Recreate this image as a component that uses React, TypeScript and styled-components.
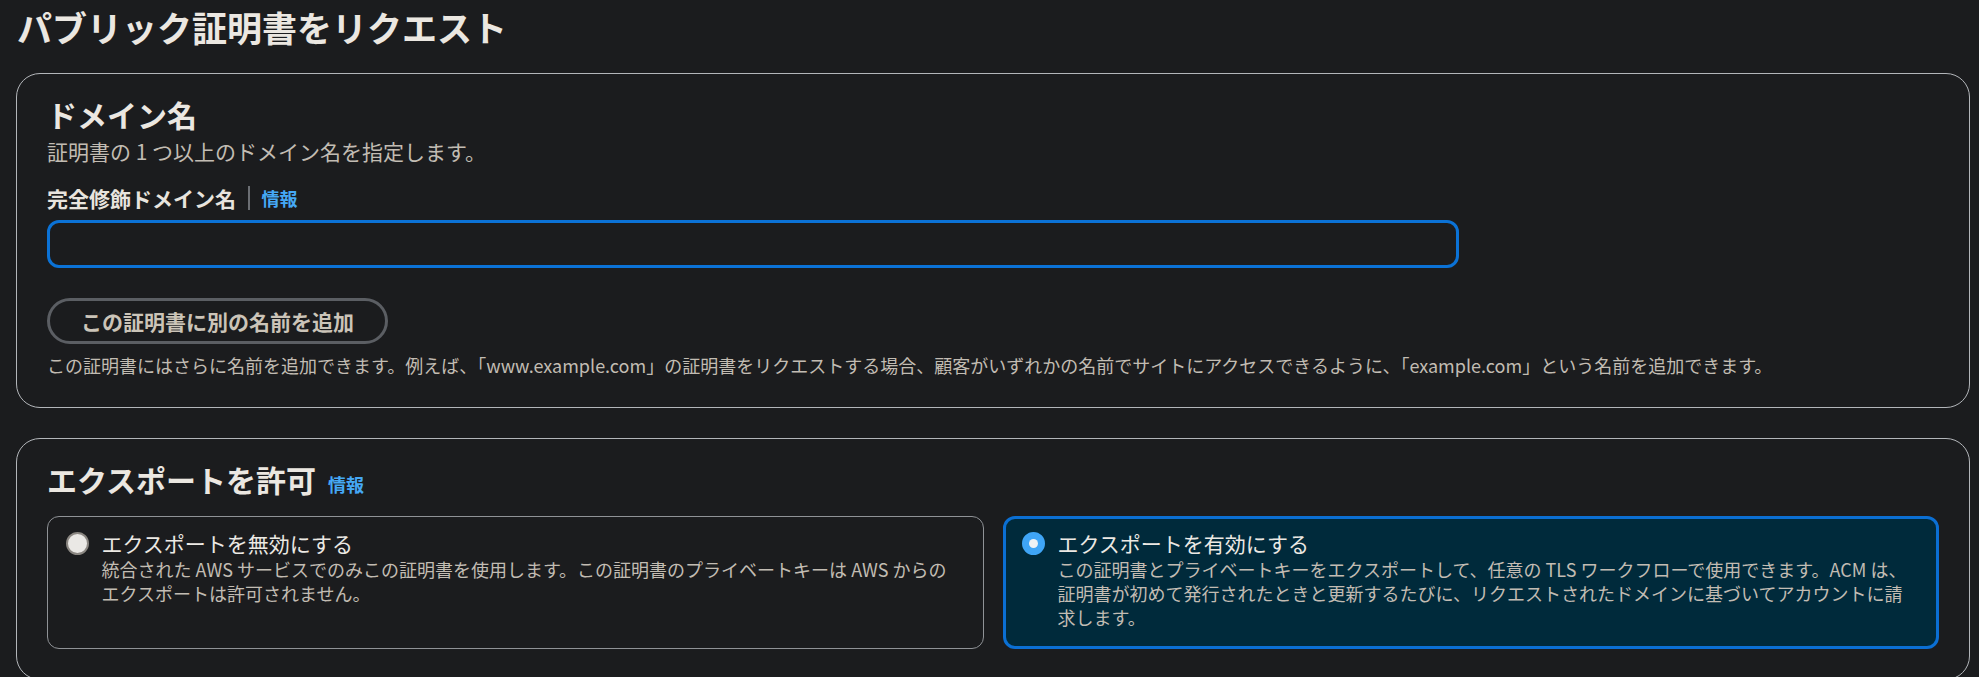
import React from 'react';
import styled, {createGlobalStyle} from 'styled-components';

const GlobalStyle = createGlobalStyle`
  html, body {
    margin: 0;
    padding: 0;
    background: #1b1c1e;
    overflow: hidden;
  }
  body {
    font-family: "Noto Sans CJK JP", "Noto Sans", sans-serif;
    color: #e8e5e0;
  }
  * {
    box-sizing: border-box;
  }
`;

const Page = styled.div`
  min-height: 677px;
  padding: 0 9px 0 16px;
  display: flex;
  flex-direction: column;
`;

const PageTitle = styled.h1`
  margin: 4px 0 23px 1px;
  font-size: 35px;
  line-height: 46px;
  font-weight: 700;
  color: #ebe7e1;
`;

const Container = styled.section`
  border: 1.5px solid #b3b6ba;
  border-radius: 24px;
  padding: 22px 30px 30px;
  margin-bottom: 30px;
`;

const HeaderRow = styled.div`
  display: flex;
  align-items: baseline;
  gap: 12px;
`;

const SectionTitle = styled.h2`
  margin: 0;
  font-size: 30px;
  line-height: 36px;
  font-weight: 700;
  color: #ebe7e1;
`;

const Description = styled.p`
  margin: 4px 0 0;
  font-size: 21px;
  line-height: 30px;
  color: #c2bcb3;
`;

const InfoLink = styled.a<{ $size?: number }>`
  font-size: ${p => p.$size ?? 18}px;
  font-weight: 700;
  color: #45a8f5;
  text-decoration: none;
  cursor: pointer;
`;

const FieldLabel = styled.div`
  margin-top: 17px;
  display: flex;
  align-items: center;
  font-size: 21px;
  line-height: 30px;
  font-weight: 700;
  color: #e8e4de;
`;

const LabelDivider = styled.span`
  width: 1.5px;
  height: 24px;
  background: #6b6e73;
  margin: 0 12px;
`;

const TextInput = styled.input`
  display: block;
  margin-top: 7px;
  width: 1412px;
  height: 48px;
  border: 3px solid #0b72d6;
  border-radius: 12px;
  background: transparent;
  color: #e8e4de;
  font: inherit;
  font-size: 21px;
  padding: 0 18px;
  outline: none;
`;

const SecondaryButton = styled.button`
  display: block;
  margin-top: 30px;
  height: 46px;
  padding: 0 31px;
  border: 3px solid #5b5e63;
  border-radius: 23px;
  background: transparent;
  color: #cbc4b8;
  font-family: inherit;
  font-size: 21px;
  font-weight: 700;
  line-height: 1;
  cursor: pointer;
`;

const Constraint = styled.p`
  margin: 9px 0 0;
  font-size: 18px;
  line-height: 24px;
  color: #c2bcb3;
`;

const TileGrid = styled.div`
  margin-top: 19px;
  display: grid;
  grid-template-columns: 1fr 1fr;
  gap: 19px;
`;

const Tile = styled.label<{ $selected?: boolean }>`
  display: flex;
  align-items: flex-start;
  gap: 13px;
  border-radius: 12px;
  border: ${p => (p.$selected ? '3px solid #0b6fd3' : '1.5px solid #8f9296')};
  background: ${p => (p.$selected ? '#002a3b' : 'transparent')};
  padding: ${p => (p.$selected ? '10px 26px 17px 16px' : '11.5px 27.5px 18.5px 17.5px')};
  cursor: pointer;
`;

const Radio = styled.span<{ $checked?: boolean }>`
  flex: none;
  width: 23px;
  height: 23px;
  margin-top: 3px;
  border-radius: 50%;
  display: flex;
  align-items: center;
  justify-content: center;
  background: ${p => (p.$checked ? '#3fa5f6' : '#eae8e5')};
  border: 2px solid ${p => (p.$checked ? '#3fa5f6' : '#8a8681')};

  &::after {
    content: '';
    display: ${p => (p.$checked ? 'block' : 'none')};
    width: 9px;
    height: 9px;
    border-radius: 50%;
    background: #eef1f4;
  }
`;

const TileText = styled.div`
  display: flex;
  flex-direction: column;
`;

const TileLabel = styled.span`
  font-size: 21px;
  line-height: 28px;
  color: #ece9e4;
`;

const TileDescription = styled.span`
  font-size: 18px;
  line-height: 24px;
  color: #c2bcb3;
`;

type ExportOption = {
    id: string
    label: string
    description: string
}

const exportOptions: ExportOption[] = [
    {
        id: 'disable',
        label: 'エクスポートを無効にする',
        description: '統合された AWS サービスでのみこの証明書を使用します。この証明書のプライベートキーは AWS からのエクスポートは許可されません。',
    },
    {
        id: 'enable',
        label: 'エクスポートを有効にする',
        description: 'この証明書とプライベートキーをエクスポートして、任意の TLS ワークフローで使用できます。ACM は、証明書が初めて発行されたときと更新するたびに、リクエストされたドメインに基づいてアカウントに請求します。',
    },
];

export default function App() {
    const [domain, setDomain] = React.useState('');
    const [exportMode, setExportMode] = React.useState('enable');

    return (
        <React.Fragment>
            <GlobalStyle />
            <Page>
                <PageTitle>パブリック証明書をリクエスト</PageTitle>

                <Container>
                    <SectionTitle>ドメイン名</SectionTitle>
                    <Description>証明書の 1 つ以上のドメイン名を指定します。</Description>

                    <FieldLabel>
                        完全修飾ドメイン名
                        <LabelDivider />
                        <InfoLink>情報</InfoLink>
                    </FieldLabel>
                    <TextInput value={domain} onChange={e => setDomain(e.target.value)} />

                    <SecondaryButton>この証明書に別の名前を追加</SecondaryButton>
                    <Constraint>
                        この証明書にはさらに名前を追加できます。例えば、「www.example.com」の証明書をリクエストする場合、顧客がいずれかの名前でサイトにアクセスできるように、「example.com」という名前を追加できます。
                    </Constraint>
                </Container>

                <Container>
                    <HeaderRow>
                        <SectionTitle>エクスポートを許可</SectionTitle>
                        <InfoLink>情報</InfoLink>
                    </HeaderRow>
                    <TileGrid>
                        {exportOptions.map(option =>
                            <Tile
                                key={option.id}
                                $selected={exportMode === option.id}
                                onClick={() => setExportMode(option.id)}
                            >
                                <Radio $checked={exportMode === option.id} />
                                <TileText>
                                    <TileLabel>{option.label}</TileLabel>
                                    <TileDescription>{option.description}</TileDescription>
                                </TileText>
                            </Tile>
                        )}
                    </TileGrid>
                </Container>
            </Page>
        </React.Fragment>
    );
}
